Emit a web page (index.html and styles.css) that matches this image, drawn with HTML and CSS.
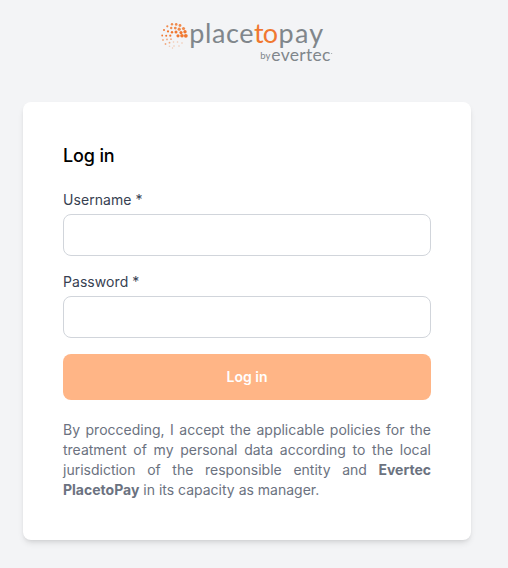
FILE: index.html
```html
<!DOCTYPE html>
<html lang="en">
<head>
<meta charset="utf-8">
<title>Log in</title>
<link rel="stylesheet" href="styles.css">
</head>
<body>
<header class="brand">
<svg class="logo" width="176" height="50" viewBox="158 16 176 50" role="img" aria-label="placetopay by evertec">
<g fill="#f07830">
<g opacity=".85"><circle cx="172" cy="24.2" r="1.2"/><circle cx="176.2" cy="24.4" r="1.3"/><circle cx="180" cy="25.5" r="1.4"/>
<circle cx="167.3" cy="26.3" r="1.1"/><circle cx="171.2" cy="28" r="1.2"/><circle cx="175.3" cy="28.1" r="1.4"/><circle cx="179.2" cy="29.2" r="1.6"/><circle cx="183.5" cy="28.5" r="1.6"/></g>
<circle cx="164" cy="30" r="1"/><circle cx="168" cy="31.4" r="1.1"/><circle cx="172" cy="32.2" r="1.2"/><circle cx="176" cy="32" r="1.5"/><circle cx="181" cy="32.6" r="1.6"/><circle cx="185" cy="31.8" r="1.7"/>
<circle cx="162.2" cy="35.5" r=".9"/><circle cx="166.2" cy="35.7" r="1"/><circle cx="170.3" cy="35.7" r="1.1"/><circle cx="178" cy="35.8" r="1.6"/><circle cx="182" cy="35.8" r="1.8"/><circle cx="185.8" cy="35.8" r="1.9"/>
<g opacity=".6"><circle cx="163" cy="40" r=".9"/><circle cx="167" cy="39.4" r=".9"/><circle cx="171" cy="39.2" r=".9"/><circle cx="165.5" cy="44" r=".9"/><circle cx="169.5" cy="42.7" r=".9"/></g>
<g opacity=".35"><circle cx="173.5" cy="42" r=".8"/><circle cx="177.5" cy="42" r=".8"/><circle cx="182" cy="43" r=".8"/><circle cx="169.5" cy="46.3" r=".8"/><circle cx="174" cy="46" r=".8"/><circle cx="179" cy="46" r=".8"/><circle cx="172.5" cy="48" r=".7"/></g>
</g>
<text class="name" x="189.2" y="42.7" textLength="64.3">place</text>
<text class="name accent" x="254" y="42.7" textLength="24">to</text>
<text class="name" x="278.6" y="42.7" textLength="44.6">pay</text>
<text class="by" x="260.3" y="59.3">by</text>
<text class="parent" x="271.3" y="60.6" textLength="59">evertec</text>
<circle cx="331.7" cy="53.5" r=".5" fill="#8a8f94"/>
</svg>
</header>
<main class="card">
<h1 class="title">Log in</h1>
<form>
<label class="label" for="user">Username *</label>
<input class="field" id="user" type="text">
<label class="label" for="pass">Password *</label>
<input class="field" id="pass" type="password">
<button class="submit" type="button">Log in</button>
</form>
<p class="terms">By procceding, I accept the applicable policies for the treatment of my personal data according to the local jurisdiction of the responsible entity and <strong>Evertec PlacetoPay</strong> in its capacity as manager.</p>
</main>
</body>
</html>
```
FILE: styles.css
```css
* { box-sizing: border-box; }
body {
  margin: 0;
  height: 568px;
  overflow: hidden;
  background: #f3f4f6;
  font-family: Inter, "Liberation Sans", sans-serif;
  font-size: 14px;
  line-height: 20px;
}
.brand { height: 102px; padding: 16px 0 0 158px; }
.logo { display: block; overflow: visible; font-family: Lato, sans-serif; fill: #80868b; }
.name { font-size: 27px; }
.accent { fill: #f07830; }
.by { font-size: 9.5px; }
.parent { font-size: 17.5px; }
.card {
  width: 448px;
  height: 438px;
  margin-left: 23px;
  padding: 40px;
  background: #fff;
  border-radius: 8px;
  box-shadow: 0 4px 6px -1px rgb(0 0 0 / .1), 0 2px 4px -2px rgb(0 0 0 / .1);
}
.title {
  margin: 0 0 20px;
  font-size: 18px;
  line-height: 28px;
  font-weight: 500;
  letter-spacing: -.15px;
  color: #000;
}
.label { display: block; margin-bottom: 4px; font-weight: 400; letter-spacing: .06px; color: #374151; }
.field {
  display: block;
  width: 100%;
  height: 42px;
  margin-bottom: 16px;
  border: 1px solid #d1d5db;
  border-radius: 8px;
  background: #fff;
}
.submit {
  display: block;
  width: 100%;
  height: 46px;
  border: 0;
  border-radius: 8px;
  background: #ffb586;
  color: #fff;
  font: 600 14px/20px Inter, sans-serif;
}
.terms { margin: 20px 0 0; color: #6b7280; text-align: justify; }
.terms strong { font-weight: 700; }
```
